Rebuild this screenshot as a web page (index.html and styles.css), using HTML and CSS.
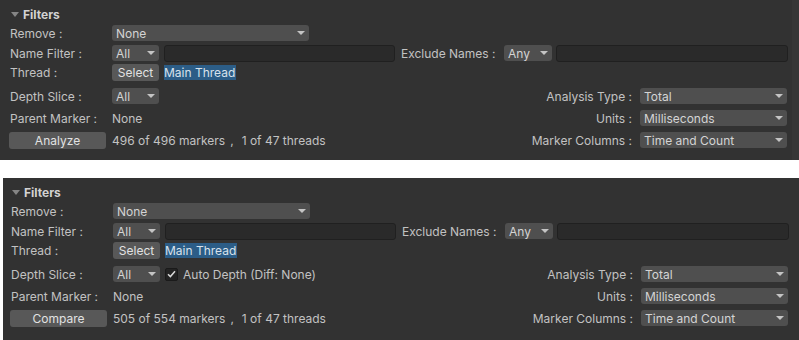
FILE: index.html
```html
<!DOCTYPE html>
<html lang="en">
  <head>
    <meta charset="UTF-8" />
    <meta name="viewport" content="width=device-width, initial-scale=1.0" />
    <title>Profile Analyzer Filters</title>
    <link rel="stylesheet" href="styles.css">
  </head>

  <body>
    <!-- single view: analyze -->
    <div class="panel panel-analyze">
      <div class="header"><span class="fold"></span>Filters</div>

      <div class="row r-remove">
        <span class="label">Remove :</span>
        <div class="popup w-remove">None</div>
      </div>

      <div class="row r-name">
        <span class="label">Name Filter :</span>
        <div class="popup w-small">All</div>
        <div class="field w-name"></div>
        <span class="label-exclude">Exclude Names :</span>
        <div class="popup w-any">Any</div>
        <div class="field w-exclude"></div>
      </div>

      <div class="row r-thread">
        <span class="label">Thread :</span>
        <div class="button w-select">Select</div>
        <span class="selected">Main Thread</span>
      </div>

      <div class="row r-depth">
        <span class="label">Depth Slice :</span>
        <div class="popup w-small">All</div>
        <div class="right">
          <span class="rlabel">Analysis Type :</span>
          <div class="popup w-right">Total</div>
        </div>
      </div>

      <div class="row r-parent">
        <span class="label">Parent Marker :</span>
        <span class="value">None</span>
        <div class="right">
          <span class="rlabel">Units :</span>
          <div class="popup w-right">Milliseconds</div>
        </div>
      </div>

      <div class="row r-run">
        <div class="button w-run">Analyze</div>
        <span class="value">496 of 496 markers</span>
        <span class="comma">,</span>
        <span class="threads">1 of 47 threads</span>
        <div class="right">
          <span class="rlabel">Marker Columns :</span>
          <div class="popup w-right">Time and Count</div>
        </div>
      </div>
    </div>

    <!-- compare view -->
    <div class="panel panel-compare">
      <div class="header"><span class="fold"></span>Filters</div>

      <div class="row r-remove">
        <span class="label">Remove :</span>
        <div class="popup w-remove">None</div>
      </div>

      <div class="row r-name">
        <span class="label">Name Filter :</span>
        <div class="popup w-small">All</div>
        <div class="field w-name"></div>
        <span class="label-exclude">Exclude Names :</span>
        <div class="popup w-any">Any</div>
        <div class="field w-exclude"></div>
      </div>

      <div class="row r-thread">
        <span class="label">Thread :</span>
        <div class="button w-select">Select</div>
        <span class="selected">Main Thread</span>
      </div>

      <div class="row r-depth">
        <span class="label">Depth Slice :</span>
        <div class="popup w-small">All</div>
        <span class="checkbox">
          <svg width="9" height="8" viewBox="0 0 9 8">
            <path d="M1 4.2 L3.4 6.6 L8 1.2" fill="none" stroke="#d8d8d8" stroke-width="1.5" />
          </svg>
        </span>
        <span class="check-label">Auto Depth (Diff: None)</span>
        <div class="right">
          <span class="rlabel">Analysis Type :</span>
          <div class="popup w-right">Total</div>
        </div>
      </div>

      <div class="row r-parent">
        <span class="label">Parent Marker :</span>
        <span class="value">None</span>
        <div class="right">
          <span class="rlabel">Units :</span>
          <div class="popup w-right">Milliseconds</div>
        </div>
      </div>

      <div class="row r-run">
        <div class="button w-run">Compare</div>
        <span class="value">505 of 554 markers</span>
        <span class="comma">,</span>
        <span class="threads">1 of 47 threads</span>
        <div class="right">
          <span class="rlabel">Marker Columns :</span>
          <div class="popup w-right">Time and Count</div>
        </div>
      </div>
    </div>
  </body>
</html>
```

FILE: styles.css
```css
body {
  margin: 0;
  background-color: #fff;
  font-family: Inter, "Noto Sans", sans-serif;
  font-size: 12px;
  color: #c2c2c2;
}

.panel {
  background-color: #323232;
  box-sizing: border-box;
}

.panel-analyze {
  width: 799px;
  height: 160px;
  padding: 5px 4px 0 10px;
  border-right: 7px solid #363636;
}

.panel-compare {
  width: 796px;
  height: 162px;
  margin: 18px 0 0 3px;
  padding: 5px 10px 0 8px;
}

.header {
  display: flex;
  align-items: center;
  height: 18px;
  font-weight: bold;
  color: #d2d2d2;
}

.fold {
  width: 0;
  height: 0;
  margin: 0 4px 0 1px;
  border-left: 4px solid transparent;
  border-right: 4px solid transparent;
  border-top: 5px solid #858585;
}

.row {
  display: flex;
  align-items: center;
  height: 18px;
}

.r-remove {
  margin-top: 1px;
}

.r-name {
  margin-top: 2px;
}

.r-thread {
  margin-top: 1px;
}

.r-depth {
  margin-top: 6px;
}

.r-parent,
.r-run {
  margin-top: 4px;
}

.label {
  width: 102px;
  flex-shrink: 0;
}

/* dropdowns */
.popup {
  display: flex;
  align-items: center;
  justify-content: space-between;
  height: 16px;
  padding: 0 4px 0 4px;
  box-sizing: border-box;
  background-color: #4f4f4f;
  border-radius: 3px;
  color: #d4d4d4;
  flex-shrink: 0;
}

.popup::after {
  content: "";
  width: 0;
  height: 0;
  border-left: 4px solid transparent;
  border-right: 4px solid transparent;
  border-top: 4px solid #c4c4c4;
}

.w-remove {
  width: 197px;
}

.w-small {
  width: 47px;
  margin-right: 5px;
}

.w-any {
  width: 48px;
  margin-right: 4px;
}

.w-right {
  width: 147px;
  margin-right: 1px;
}

.field {
  height: 17px;
  box-sizing: border-box;
  background-color: #2a2a2a;
  border: 1px solid #202020;
  border-radius: 3px;
}

.w-name {
  width: 231px;
  margin-right: 6px;
}

.label-exclude {
  width: 103px;
  flex-shrink: 0;
}

.w-exclude {
  flex: 1;
}

.button {
  height: 17px;
  line-height: 17px;
  background-color: #585858;
  border-radius: 3px;
  color: #e2e2e2;
  text-align: center;
  flex-shrink: 0;
}

.w-select {
  width: 47px;
  margin-right: 5px;
}

.w-run {
  width: 97px;
  margin: 0 6px 0 -1px;
}

.selected {
  width: 72px;
  height: 15px;
  line-height: 15px;
  background-color: #2c5d87;
  color: #d8e2ec;
}

.checkbox {
  display: flex;
  align-items: center;
  justify-content: center;
  width: 13px;
  height: 13px;
  box-sizing: border-box;
  margin: 0 5px 0 0;
  background-color: #232323;
  border: 1px solid #1a1a1a;
  border-radius: 2px;
}

.comma {
  margin-left: 5px;
}

.threads {
  margin-left: 8px;
}

.right {
  display: flex;
  align-items: center;
  margin-left: auto;
}

.rlabel {
  margin-right: 8px;
}
```
